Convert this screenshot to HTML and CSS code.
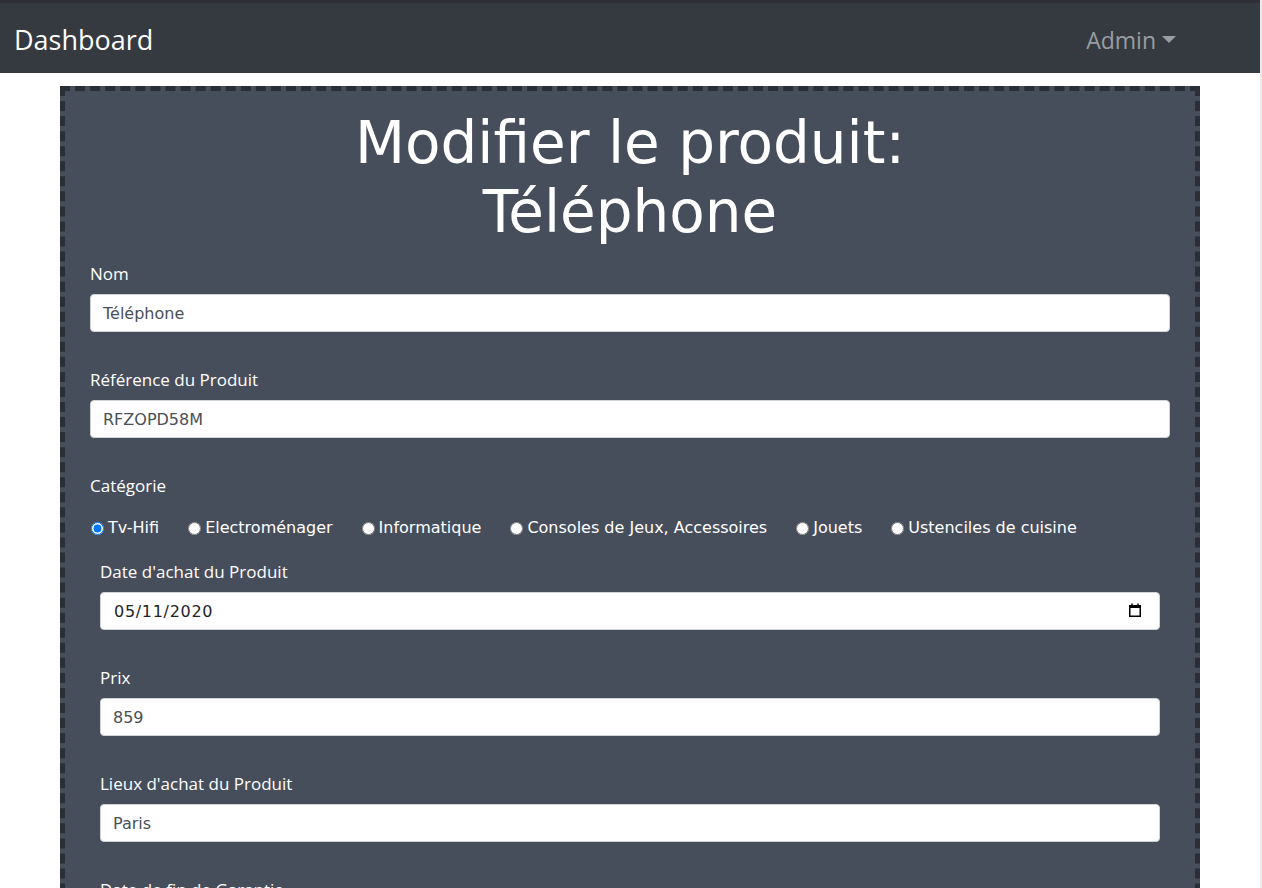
FILE: index.html
```html
<!DOCTYPE html>
<html lang="fr">
<head>
<meta charset="utf-8">
<title>Modifier le produit</title>
<link rel="stylesheet" href="styles.css">
</head>
<body>
<nav class="navbar">
  <a class="brand" href="#">Dashboard</a>
  <div class="user">Admin<span class="caret"></span></div>
</nav>
<main class="panel">
  <h1 class="title">Modifier le produit:<br>Téléphone</h1>
  <form class="form">
    <div class="group">
      <label class="label" for="nom">Nom</label>
      <input class="field" id="nom" type="text" value="Téléphone">
    </div>
    <div class="group">
      <label class="label" for="ref">Référence du Produit</label>
      <input class="field" id="ref" type="text" value="RFZOPD58M">
    </div>
    <div class="group-cat">
      <div class="label">Catégorie</div>
      <div class="radios">
        <label class="radio"><input type="radio" name="cat" checked><span>Tv-Hifi</span></label>
        <label class="radio"><input type="radio" name="cat"><span>Electroménager</span></label>
        <label class="radio"><input type="radio" name="cat"><span>Informatique</span></label>
        <label class="radio"><input type="radio" name="cat"><span>Consoles de Jeux, Accessoires</span></label>
        <label class="radio"><input type="radio" name="cat"><span>Jouets</span></label>
        <label class="radio"><input type="radio" name="cat"><span>Ustenciles de cuisine</span></label>
      </div>
    </div>
    <div class="details">
      <div class="group">
        <label class="label" for="date">Date d'achat du Produit</label>
        <div class="date-wrap">
          <input class="field date" id="date" type="text" value="05/11/2020">
          <svg class="cal" width="16" height="16" viewBox="0 0 16 16" aria-hidden="true">
            <rect x="2.75" y="3.75" width="10.5" height="10.5" fill="none" stroke="#000" stroke-width="1.5"/>
            <rect x="2" y="3" width="12" height="3" fill="#000"/>
            <rect x="4.25" y="1.5" width="1.5" height="3" fill="#000"/>
            <rect x="10.25" y="1.5" width="1.5" height="3" fill="#000"/>
          </svg>
        </div>
      </div>
      <div class="group">
        <label class="label" for="prix">Prix</label>
        <input class="field" id="prix" type="text" value="859">
      </div>
      <div class="group">
        <label class="label" for="lieu">Lieux d'achat du Produit</label>
        <input class="field" id="lieu" type="text" value="Paris">
      </div>
      <div class="group">
        <label class="label" for="fin">Date de fin de Garantie</label>
        <input class="field" id="fin" type="text" value="05/11/2022">
      </div>
    </div>
  </form>
</main>
</body>
</html>
```

FILE: styles.css
```css
html, body {
  margin: 0;
  padding: 0;
}
body {
  background: #ffffff;
  border-right: 2px solid #ebebeb;
  font-family: "Open Sans", "Noto Sans", sans-serif;
  font-size: 16px;
  color: #ffffff;
}
.navbar {
  box-sizing: border-box;
  height: 73px;
  background: #343a40;
  border-top: 3px solid #2e3035;
  padding: 4px 84px 0 14px;
  display: flex;
  align-items: center;
  justify-content: space-between;
}
.brand {
  font-family: "Open Sans", "Noto Sans", sans-serif;
  font-size: 27px;
  line-height: 36px;
  color: #ffffff;
  text-decoration: none;
}
.user {
  font-family: "Open Sans", "Noto Sans", sans-serif;
  font-size: 23px;
  line-height: 32px;
  color: #9a9da1;
  display: flex;
  align-items: center;
}
.caret {
  display: inline-block;
  width: 0;
  height: 0;
  margin-left: 6px;
  margin-top: -2px;
  border-top: 7px solid #9a9da1;
  border-left: 7px solid transparent;
  border-right: 7px solid transparent;
}
.panel {
  box-sizing: border-box;
  width: 1140px;
  margin: 13px auto 0;
  background: #474e5b;
  border: 5px dashed #2a2f37;
  padding: 18px 25px 40px;
}
.title {
  margin: 0 0 15px;
  font-family: "DejaVu Sans", Verdana, sans-serif;
  font-weight: normal;
  font-size: 58px;
  line-height: 69px;
  text-align: center;
  color: #ffffff;
}
.form {
  margin: 0;
}
.group {
  margin-bottom: 36px;
}
.label {
  display: block;
  font-family: "Open Sans", "Noto Sans", sans-serif;
  font-size: 17px;
  line-height: 24px;
  margin-bottom: 8px;
  color: #ffffff;
}
.field {
  display: block;
  box-sizing: border-box;
  width: 100%;
  height: 38px;
  margin: 0;
  padding: 6px 12px;
  border: 1px solid #ced4da;
  border-radius: 4px;
  background: #ffffff;
  font-family: "DejaVu Sans", Verdana, sans-serif;
  font-size: 16px;
  line-height: 24px;
  color: #495057;
  outline: none;
}
.group-cat {
  margin-bottom: 20px;
}
.radios {
  display: flex;
  align-items: center;
  height: 24px;
  margin-top: 18px;
}
.radio {
  display: flex;
  align-items: center;
  margin-right: 28px;
  font-family: "DejaVu Sans", Tahoma, sans-serif;
  font-size: 16px;
  line-height: 24px;
  color: #ffffff;
}
.radio input {
  width: 13px;
  height: 13px;
  margin: 0 4px 0 1px;
}
.details {
  margin: 0 10px;
}
.date-wrap {
  position: relative;
}
.field.date {
  padding-left: 13px;
  letter-spacing: 0.7px;
  color: #212529;
}
.cal {
  position: absolute;
  right: 17px;
  top: 10px;
}
```
